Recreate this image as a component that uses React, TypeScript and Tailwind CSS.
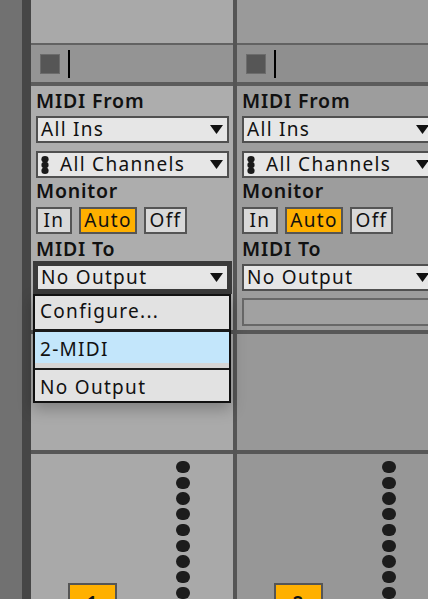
import type { ReactNode } from "react";

type Tone = { top: string; head: string; body: string; mid: string; low: string };

const TONES: Record<"selected" | "normal", Tone> = {
  selected: {
    top: "bg-[#a9a9a9]",
    head: "bg-[#949494]",
    body: "bg-[#adadad]",
    mid: "bg-[#aaaaaa]",
    low: "bg-[#a9a9a9]",
  },
  normal: {
    top: "bg-[#9a9a9a]",
    head: "bg-[#8f8f8f]",
    body: "bg-[#9d9d9d]",
    mid: "bg-[#989898]",
    low: "bg-[#979797]",
  },
};

function Tri() {
  return (
    <svg width="13" height="9" viewBox="0 0 13 9" className="shrink-0">
      <polygon points="0,0 13,0 6.5,9" fill="#111" />
    </svg>
  );
}

function ChannelIcon() {
  return (
    <svg width="8" height="18" viewBox="0 0 8 18" className="shrink-0">
      <ellipse cx="4" cy="3.2" rx="3.6" ry="3.2" fill="#1a1a1a" />
      <ellipse cx="4" cy="9" rx="3.6" ry="3.2" fill="#1a1a1a" />
      <ellipse cx="4" cy="14.8" rx="3.6" ry="3.2" fill="#1a1a1a" />
    </svg>
  );
}

function Label({ children, className = "" }: { children: ReactNode; className?: string }) {
  return (
    <div className={`h-[24px] text-[19.5px] font-semibold leading-[24px] tracking-[0.8px] ${className}`}>
      {children}
    </div>
  );
}

function Dropdown({
  label,
  icon,
  focused,
  className = "",
}: {
  label: string;
  icon?: ReactNode;
  focused?: boolean;
  className?: string;
}) {
  return (
    <div
      className={`flex h-[27px] items-center justify-between border-2 bg-[#e6e6e6] pl-[3px] pr-[4px] leading-[23px] ${
        focused ? "border-[#3a3a3a] shadow-[0_0_0_3px_#3a3a3a]" : "border-[#505050]"
      } ${className}`}
    >
      <div className="flex items-center gap-[11px] whitespace-nowrap">
        {icon}
        <span>{label}</span>
      </div>
      <Tri />
    </div>
  );
}

function MonitorButtons() {
  return (
    <div className="mt-[4px] flex gap-[7px] leading-[23px]">
      <div className="h-[27px] w-[36px] border-2 border-[#555] bg-[#d9d9d9] text-center">In</div>
      <div className="h-[27px] w-[58px] border-2 border-[#555] bg-[#ffb000] text-center">Auto</div>
      <div className="h-[27px] w-[43px] border-2 border-[#555] bg-[#d9d9d9] text-center">Off</div>
    </div>
  );
}

function Track({ tone, num, focused }: { tone: Tone; num: string; focused?: boolean }) {
  return (
    <div className="flex w-[202px] shrink-0 flex-col">
      <div className={`h-[43px] ${tone.top}`} />
      <div className="h-[2px] bg-[#626262]" />
      <div className={`flex h-[37px] items-center pl-[9px] ${tone.head}`}>
        <div className="h-[20px] w-[20px] border border-[#6c6c6c] bg-[#565656]" />
        <div className="ml-[8px] h-[28px] w-[2px] bg-black" />
      </div>
      <div className="h-[4px] bg-[#5c5c5c]" />
      <div className={`flex h-[244px] flex-col pl-[5px] pr-[4px] pt-[3px] ${tone.body}`}>
        <Label>MIDI From</Label>
        <Dropdown label="All Ins" className="mt-[3px]" />
        <Dropdown label="All Channels" icon={<ChannelIcon />} className="mt-[8px]" />
        <Label className="mt-[1px]">Monitor</Label>
        <MonitorButtons />
        <Label className="mt-[3px]">MIDI To</Label>
        <Dropdown label="No Output" focused={focused} className="mt-[3px]" />
        {!focused && (
          <div className="mt-[7px] h-[28px] border-2 border-[#686868] bg-[#a1a1a1]" />
        )}
      </div>
      <div className="h-[4px] bg-[#575757]" />
      <div className={`h-[116px] ${tone.mid}`} />
      <div className="h-[4px] bg-[#575757]" />
      <div className={`flex flex-1 overflow-hidden pl-[37px] ${tone.low}`}>
        <div className="mt-[129px] h-[40px] w-[49px] shrink-0 border-2 border-[#555] bg-[#ffb000] pt-[6px] text-center font-semibold leading-[24px]">
          {num}
        </div>
        <div className="ml-[59px] mt-[7px] flex flex-col gap-[3.4px]">
          {Array.from({ length: 9 }).map((_, i) => (
            <div key={i} className="h-[14px] w-[14px] rounded-full bg-[#1c1c1c]" />
          ))}
        </div>
      </div>
    </div>
  );
}

export default function App() {
  return (
    <div className="relative flex h-[599px] w-[428px] overflow-hidden bg-[#707070] font-['Noto_Sans',sans-serif] text-[19px] tracking-[1.3px] text-[#111]">
      <div className="w-[22px] shrink-0 bg-[#717171]" />
      <div className="w-[9px] shrink-0 bg-[#464646]" />
      <Track tone={TONES.selected} num="1" focused />
      <div className="w-[4px] shrink-0 bg-[#555]" />
      <Track tone={TONES.normal} num="2" />

      {/* open MIDI To menu */}
      <div className="absolute left-[33px] top-[294px] w-[198px] border-2 border-[#111] bg-[#e2e2e2] shadow-[0_6px_14px_rgba(0,0,0,0.25)]">
        <div className="h-[33px] pl-[5px] pt-[3px] leading-[24px]">Configure...</div>
        <div className="h-[3px] bg-[#1a1a1a]" />
        <div className="h-[36px] bg-[#d6d6d6]">
          <div className="h-[31px] bg-[#c3e6fb] pl-[5px] pt-[5px] leading-[24px]">2-MIDI</div>
        </div>
        <div className="h-[2px] bg-[#1a1a1a]" />
        <div className="h-[31px] pl-[5px] pt-[5px] leading-[24px]">No Output</div>
      </div>
    </div>
  );
}
